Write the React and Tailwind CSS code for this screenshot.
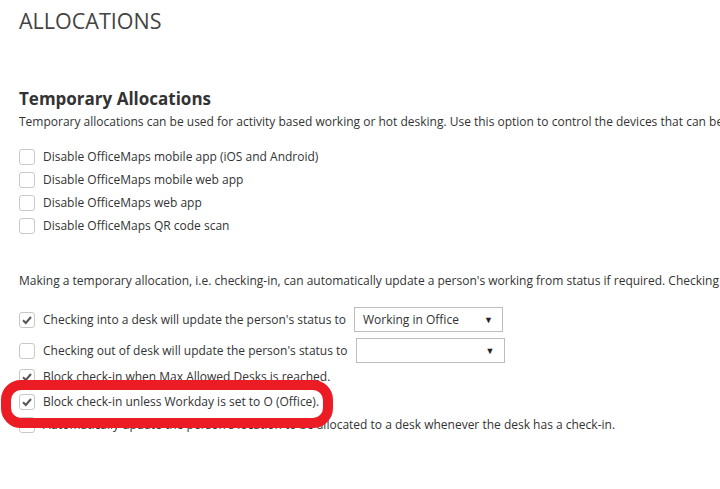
import React from "react";

function Check({ checked }) {
  return (
    <span className="flex h-4 w-4 shrink-0 items-center justify-center rounded-[3px] border border-[#c8c8c8] bg-white">
      {checked && (
        <svg width="12" height="12" viewBox="0 0 12 12" fill="none">
          <path d="M2 6.2 L4.8 9 L10 3" stroke="#555" strokeWidth="2" />
        </svg>
      )}
    </span>
  );
}

function Row({ checked, children, className = "" }) {
  return (
    <div className={`flex items-center gap-[8px] whitespace-nowrap ${className}`}>
      <Check checked={checked} />
      {children}
    </div>
  );
}

function Select({ value, className = "" }) {
  return (
    <div
      className={`flex h-[25px] w-[149px] items-center justify-between border border-[#bdbdbd] bg-white pl-[8px] pr-[9px] ${className}`}
    >
      <span>{value}</span>
      <span className="text-[9px] text-[#222]">▼</span>
    </div>
  );
}

export default function App() {
  return (
    <div className="relative h-[489px] w-[720px] overflow-hidden bg-white font-['Open_Sans',sans-serif] text-[12px] text-[#333]">
      <div className="pl-[19px] pt-[6px]">
        <h1 className="text-[21.5px] font-normal leading-[30px] text-[#444]">ALLOCATIONS</h1>

        <h2 className="mt-[52px] text-[17px] font-bold leading-[22px] text-[#333]">
          Temporary Allocations
        </h2>
        <p className="mt-[3px] whitespace-nowrap leading-[18px]">
          Temporary allocations can be used for activity based working or hot desking. Use this option to control the devices that can be used.
        </p>

        <div className="mt-[17px] flex flex-col gap-[5px] leading-[18px]">
          <Row>Disable OfficeMaps mobile app (iOS and Android)</Row>
          <Row>Disable OfficeMaps mobile web app</Row>
          <Row>Disable OfficeMaps web app</Row>
          <Row>Disable OfficeMaps QR code scan</Row>
        </div>

        <p className="mt-[37px] whitespace-nowrap leading-[18px]">
          Making a temporary allocation, i.e. checking-in, can automatically update a person's working from status if required. Checking out will reset it.
        </p>

        <div className="mt-[17px] flex flex-col leading-[18px]">
          <Row checked>
            <span>Checking into a desk will update the person's status to</span>
            <Select value="Working in Office" />
          </Row>
          <Row className="mt-[6px]">
            <span>Checking out of desk will update the person's status to</span>
            <Select value="" />
          </Row>
          <Row checked className="mt-[5px]">Block check-in when Max Allowed Desks is reached.</Row>
          <Row checked className="mt-[7px]">Block check-in unless Workday is set to O (Office).</Row>
          <Row className="mt-[5px]">
            Automatically update the person's location to be allocated to a desk whenever the desk has a check-in.
          </Row>
        </div>
      </div>

      <div className="pointer-events-none absolute left-[1px] top-[380px] h-[48px] w-[332px] rounded-[20px] border-[10px] border-[#ec1c24]" />
    </div>
  );
}
